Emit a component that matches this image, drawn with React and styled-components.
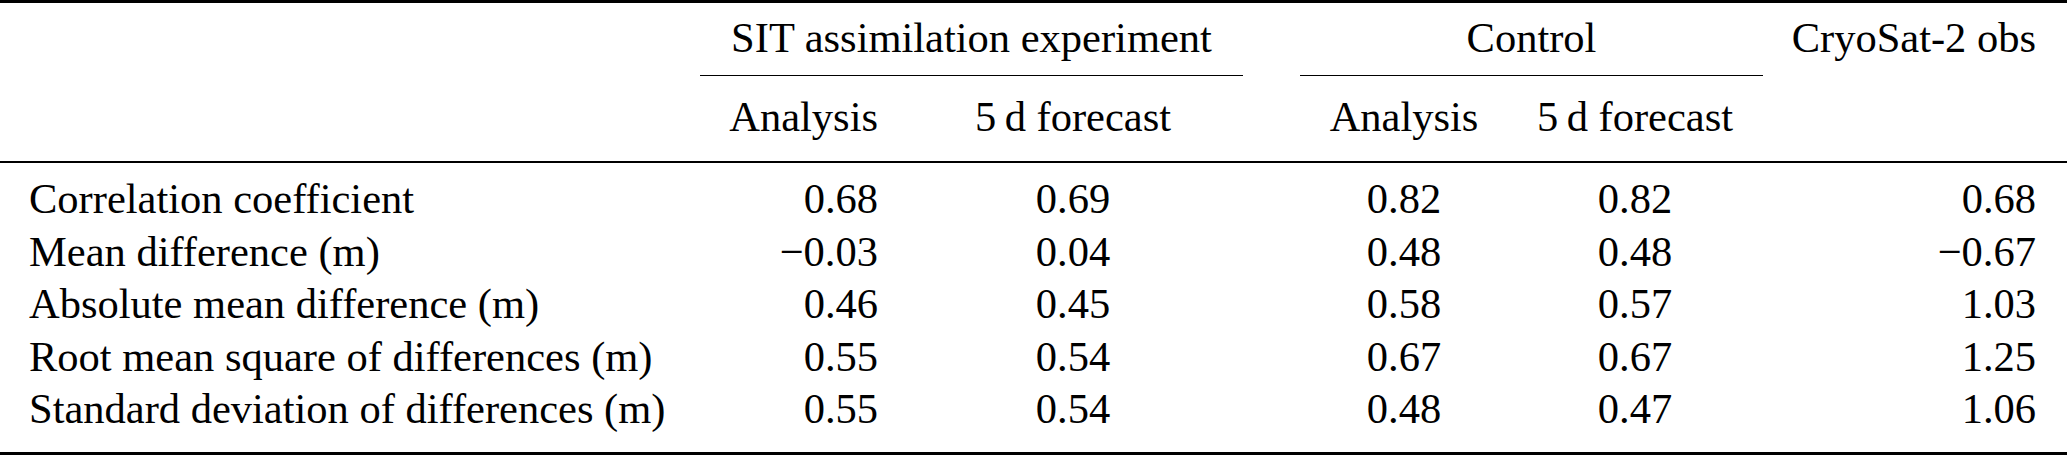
import React from 'react';
import styled, { createGlobalStyle } from 'styled-components';

const GlobalStyle = createGlobalStyle`
  html, body {
    margin: 0;
    padding: 0;
    background: #ffffff;
  }
  body {
    width: 2067px;
    height: 456px;
    overflow: hidden;
  }
`;

const Table = styled.div`
  width: 2067px;
  font-family: "Liberation Serif", "Times New Roman", serif;
  font-size: 42.5px;
  line-height: 52.5px;
  color: #000;
`;

const Rule = styled.div`
  height: ${props => props.$weight}px;
  background: #000;
`;

const Row = styled.div`
  display: grid;
  grid-template-columns: 671.5px 228.5px 371.5px 238.5px 281.5px 1fr;
  align-items: start;
  padding-top: ${props => props.$top || 0}px;
  padding-bottom: ${props => props.$bottom || 0}px;
`;

const Body = styled.div`
  padding: 10.4px 0 16.1px;
`;

const Cell = styled.div`
  grid-column: ${props => props.$col};
  text-align: ${props => props.$align};
  padding-left: ${props => props.$pl || 0}px;
  padding-right: ${props => props.$pr || 0}px;
  white-space: nowrap;
`;

const GroupHead = styled.div`
  grid-column: ${props => props.$span};
  margin: 0 28.5px;
  padding-bottom: 10.6px;
  border-bottom: 1.3px solid #000;
  text-align: center;
  white-space: nowrap;
`;

// label, SIT analysis, SIT 5 d forecast, control analysis, control 5 d forecast, CryoSat-2
const columns = [
  { align: 'left', pl: 29 },
  { align: 'right', pr: 22 },
  { align: 'center', pr: 25.5 },
  { align: 'center', pl: 26.5 },
  { align: 'center', pr: 31.5 },
  { align: 'right', pr: 31 },
];

const rows = [
  ['Correlation coefficient', '0.68', '0.69', '0.82', '0.82', '0.68'],
  ['Mean difference (m)', '\u22120.03', '0.04', '0.48', '0.48', '\u22120.67'],
  ['Absolute mean difference (m)', '0.46', '0.45', '0.58', '0.57', '1.03'],
  ['Root mean square of differences (m)', '0.55', '0.54', '0.67', '0.67', '1.25'],
  ['Standard deviation of differences (m)', '0.55', '0.54', '0.48', '0.47', '1.06'],
];

const subHeads = ['', 'Analysis', '5\u2009d forecast', 'Analysis', '5\u2009d forecast', ''];

const TableCell = ({ index, children }) => {
  const c = columns[index];
  return (
    <Cell $col={index + 1} $align={c.align} $pl={c.pl} $pr={c.pr}>
      {children}
    </Cell>
  );
};

export default function App() {
  return (
    <>
      <GlobalStyle />
      <Table>
        <Rule $weight={3} />
        <Row $top={9.4}>
          <GroupHead $span="2 / 4">SIT assimilation experiment</GroupHead>
          <GroupHead $span="4 / 6">Control</GroupHead>
          <TableCell index={5}>CryoSat-2 obs</TableCell>
        </Row>
        <Row $top={14.6} $bottom={17.1}>
          {subHeads.map((text, i) => (
            <TableCell key={i} index={i}>{text}</TableCell>
          ))}
        </Row>
        <Rule $weight={2} />
        <Body>
          {rows.map(row => (
            <Row key={row[0]}>
              {row.map((value, i) => (
                <TableCell key={i} index={i}>{value}</TableCell>
              ))}
            </Row>
          ))}
        </Body>
        <Rule $weight={3} />
      </Table>
    </>
  );
}
